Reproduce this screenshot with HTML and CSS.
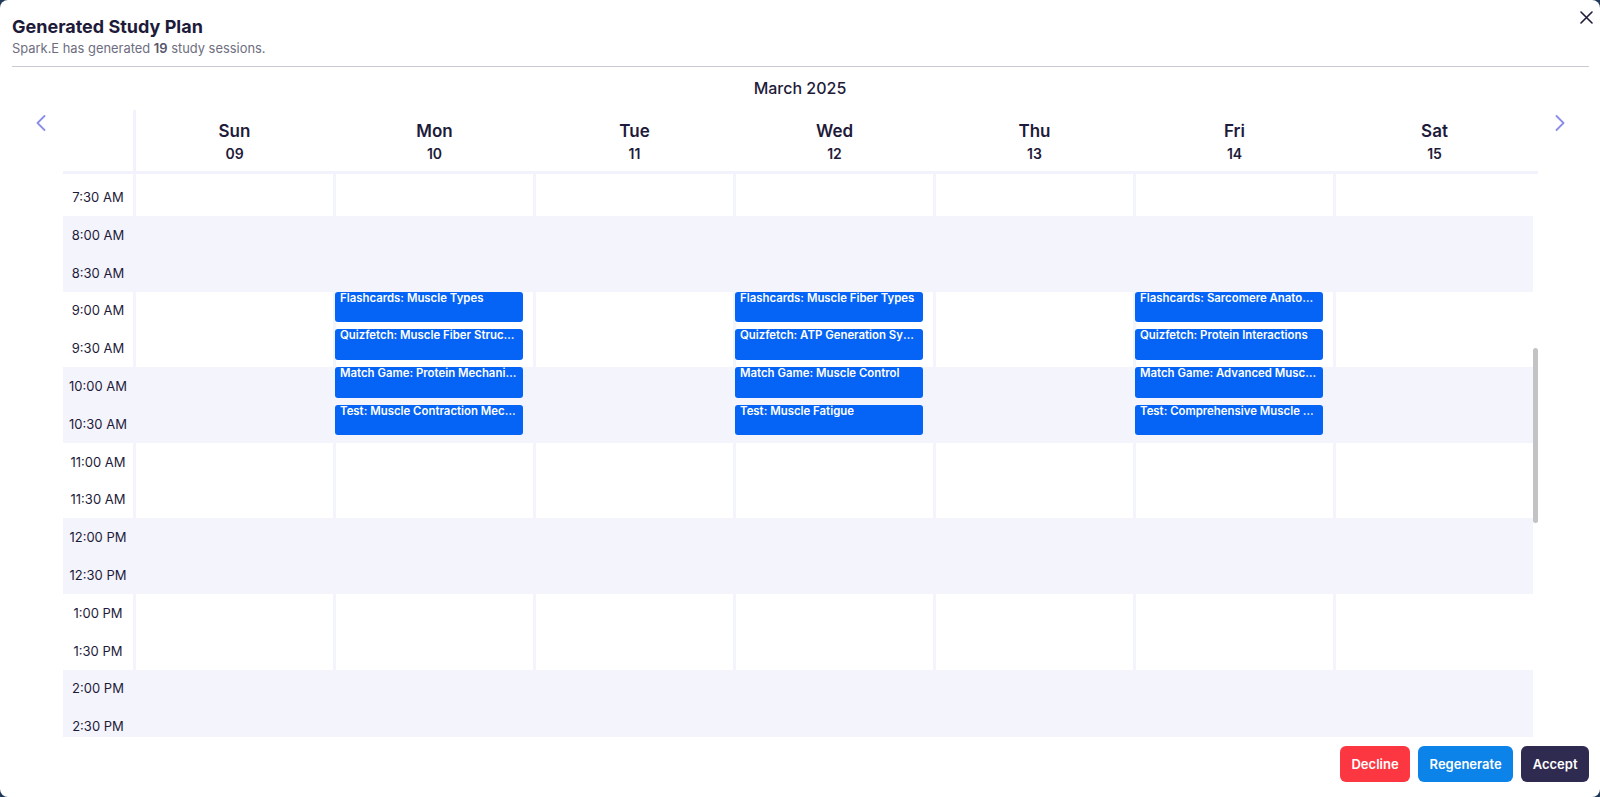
FILE: index.html
```html
<!DOCTYPE html>
<html lang="en">
<head>
<meta charset="utf-8">
<title>Generated Study Plan</title>
<link rel="stylesheet" href="styles.css">
</head>
<body>
<div class="modal">
  <div class="head">
    <div class="titles">
      <h1 class="title">Generated Study Plan</h1>
      <p class="subtitle">Spark.E has generated <b>19</b> study sessions.</p>
    </div>
    <button class="close" aria-label="Close">
      <svg width="13" height="13" viewBox="0 0 13 13"><path d="M1 1 L12 12 M12 1 L1 12" stroke="#1e1b3a" stroke-width="1.6" stroke-linecap="round" fill="none"/></svg>
    </button>
  </div>
  <div class="divider"></div>
  <div class="month">March 2025</div>

  <div class="cal-row">
    <div class="nav nav-left">
      <svg width="10" height="16" viewBox="0 0 10 16"><path d="M8.5 1 L1.5 8 L8.5 15" stroke="#8a8ee8" stroke-width="1.8" stroke-linecap="round" stroke-linejoin="round" fill="none"/></svg>
    </div>

    <div class="cal">
      <div class="cal-head">
        <div class="grid head-grid">
          <div class="corner"></div>
          <div class="day"><span class="dname">Sun</span><span class="dnum">09</span></div>
          <div class="day"><span class="dname">Mon</span><span class="dnum">10</span></div>
          <div class="day"><span class="dname">Tue</span><span class="dnum">11</span></div>
          <div class="day"><span class="dname">Wed</span><span class="dnum">12</span></div>
          <div class="day"><span class="dname">Thu</span><span class="dnum">13</span></div>
          <div class="day"><span class="dname">Fri</span><span class="dnum">14</span></div>
          <div class="day"><span class="dname">Sat</span><span class="dnum">15</span></div>
        </div>
      </div>
      <div class="cal-body">
        <div class="rows">
          <div class="grid hour white first">
            <div class="tcell"><span class="tl">7:30 AM</span></div>
            <div class="cell"></div><div class="cell"></div><div class="cell"></div><div class="cell"></div><div class="cell"></div><div class="cell"></div><div class="cell"></div>
          </div>
          <div class="grid hour shade">
            <div class="tcell"><span class="tl">8:00 AM</span><span class="tl">8:30 AM</span></div>
            <div class="cell"></div><div class="cell"></div><div class="cell"></div><div class="cell"></div><div class="cell"></div><div class="cell"></div><div class="cell"></div>
          </div>
          <div class="grid hour white">
            <div class="tcell"><span class="tl">9:00 AM</span><span class="tl">9:30 AM</span></div>
            <div class="cell"></div>
            <div class="cell">
              <div class="ev">Flashcards: Muscle Types</div>
              <div class="ev">Quizfetch: Muscle Fiber Structure</div>
            </div>
            <div class="cell"></div>
            <div class="cell">
              <div class="ev">Flashcards: Muscle Fiber Types</div>
              <div class="ev">Quizfetch: ATP Generation Systems</div>
            </div>
            <div class="cell"></div>
            <div class="cell">
              <div class="ev">Flashcards: Sarcomere Anatomy</div>
              <div class="ev">Quizfetch: Protein Interactions</div>
            </div>
            <div class="cell"></div>
          </div>
          <div class="grid hour shade">
            <div class="tcell"><span class="tl">10:00 AM</span><span class="tl">10:30 AM</span></div>
            <div class="cell"></div>
            <div class="cell">
              <div class="ev">Match Game: Protein Mechanisms</div>
              <div class="ev">Test: Muscle Contraction Mechanisms</div>
            </div>
            <div class="cell"></div>
            <div class="cell">
              <div class="ev">Match Game: Muscle Control</div>
              <div class="ev">Test: Muscle Fatigue</div>
            </div>
            <div class="cell"></div>
            <div class="cell">
              <div class="ev">Match Game: Advanced Muscle Physiology</div>
              <div class="ev">Test: Comprehensive Muscle Review</div>
            </div>
            <div class="cell"></div>
          </div>
          <div class="grid hour white">
            <div class="tcell"><span class="tl">11:00 AM</span><span class="tl">11:30 AM</span></div>
            <div class="cell"></div><div class="cell"></div><div class="cell"></div><div class="cell"></div><div class="cell"></div><div class="cell"></div><div class="cell"></div>
          </div>
          <div class="grid hour shade">
            <div class="tcell"><span class="tl">12:00 PM</span><span class="tl">12:30 PM</span></div>
            <div class="cell"></div><div class="cell"></div><div class="cell"></div><div class="cell"></div><div class="cell"></div><div class="cell"></div><div class="cell"></div>
          </div>
          <div class="grid hour white">
            <div class="tcell"><span class="tl">1:00 PM</span><span class="tl">1:30 PM</span></div>
            <div class="cell"></div><div class="cell"></div><div class="cell"></div><div class="cell"></div><div class="cell"></div><div class="cell"></div><div class="cell"></div>
          </div>
          <div class="grid hour shade">
            <div class="tcell"><span class="tl">2:00 PM</span><span class="tl">2:30 PM</span></div>
            <div class="cell"></div><div class="cell"></div><div class="cell"></div><div class="cell"></div><div class="cell"></div><div class="cell"></div><div class="cell"></div>
          </div>
        </div>
        <div class="track"><div class="thumb"></div></div>
      </div>
    </div>

    <div class="nav nav-right">
      <svg width="10" height="16" viewBox="0 0 10 16"><path d="M1.5 1 L8.5 8 L1.5 15" stroke="#8a8ee8" stroke-width="1.8" stroke-linecap="round" stroke-linejoin="round" fill="none"/></svg>
    </div>
  </div>

  <div class="footer">
    <button class="btn btn-decline">Decline</button>
    <button class="btn btn-regen">Regenerate</button>
    <button class="btn btn-accept">Accept</button>
  </div>
</div>
</body>
</html>
```

FILE: styles.css
```css
* { box-sizing: border-box; }

html, body {
  margin: 0;
  padding: 0;
}

body {
  background: #22395a;
  font-family: Inter, "Noto Sans", "Liberation Sans", sans-serif;
  color: #1e1b3a;
  width: 1600px;
  height: 797px;
  overflow: hidden;
}

.modal {
  width: 1600px;
  height: 797px;
  background: #ffffff;
  border-radius: 8px;
  display: flex;
  flex-direction: column;
}

.head {
  display: flex;
  align-items: flex-start;
  padding: 0 7px 0 12px;
}

.titles {
  flex: 1;
  padding-top: 15.5px;
}

.title {
  margin: 0;
  font-size: 18px;
  line-height: 22px;
  font-weight: 700;
  color: #1e1b3a;
}

.subtitle {
  margin: 3.75px 0 0;
  font-size: 12.9px;
  line-height: 16px;
  color: #6e6e80;
}

.subtitle b {
  font-weight: 600;
  color: #55556a;
}

.close {
  margin-top: 11px;
  width: 13px;
  height: 13px;
  padding: 0;
  border: 0;
  background: none;
  display: block;
}

.close svg { display: block; }

.divider {
  margin: 8.75px 11px 0 12px;
  height: 1px;
  background: #c9c9d2;
}

.month {
  margin-top: 11px;
  text-align: center;
  font-size: 16px;
  line-height: 20px;
  font-weight: 500;
  color: #1e1b3a;
}

.cal-row {
  margin-top: 12px;
  display: flex;
  align-items: flex-start;
}

.nav {
  padding-top: 5px;
}

.nav svg { display: block; }

.nav-left {
  width: 63px;
  padding-left: 36px;
}

.nav-right {
  padding-left: 17px;
}

.cal {
  width: 1475px;
}

.grid {
  display: grid;
  grid-template-columns: 70px repeat(7, 197px);
  column-gap: 3px;
  width: 1470px;
}

.cal-head {
  border-bottom: 3px solid #f2f2fc;
}

.head-grid {
  background: #ffffff;
  height: 61px;
}

.corner {
  background: #ffffff;
  box-shadow: 3px 0 0 #f2f2fc;
}

.day {
  display: flex;
  flex-direction: column;
  align-items: center;
  padding-top: 10.5px;
}

.dname {
  font-size: 17px;
  line-height: 20px;
  font-weight: 600;
  color: #1e1b3a;
}

.dnum {
  margin-top: 4px;
  font-size: 14px;
  line-height: 17px;
  font-weight: 600;
  color: #1e1b3a;
}

.cal-body {
  display: flex;
  height: 563px;
  overflow: hidden;
}

.rows {
  width: 1470px;
  display: flex;
  flex-direction: column;
}

.hour {
  background: #f4f4fd;
  height: 75.6px;
  flex: none;
}

.hour.first {
  height: 42px;
}

.tcell {
  display: flex;
  flex-direction: column;
  justify-content: flex-end;
}

.hour:not(.first) .tcell {
  justify-content: flex-start;
}

.tl {
  height: 37.8px;
  display: flex;
  align-items: center;
  justify-content: center;
  font-size: 13px;
  font-weight: 400;
  color: #1e1b3a;
  white-space: nowrap;
}

.white .tcell,
.white .cell {
  background: #ffffff;
}

.cell {
  display: flex;
  flex-direction: column;
  gap: 7.3px;
  min-width: 0;
}

.ev {
  margin-left: -1px;
  width: 188px;
  height: 30.5px;
  flex: none;
  background: #0563f5;
  border-radius: 3px;
  color: #ffffff;
  font-size: 11.4px;
  line-height: 13px;
  font-weight: 600;
  padding: 0 5px;
  white-space: nowrap;
  overflow: hidden;
  text-overflow: ellipsis;
}

.track {
  width: 5px;
  padding-top: 174px;
}

.thumb {
  width: 5px;
  height: 175px;
  border-radius: 3px;
  background: #c3c3c6;
}

.footer {
  margin-top: 9px;
  display: flex;
  justify-content: flex-end;
  gap: 8px;
  padding-right: 11px;
}

.btn {
  height: 36px;
  padding: 0 11.5px;
  border: 0;
  border-radius: 6px;
  font-family: Inter, "Noto Sans", "Liberation Sans", sans-serif;
  font-size: 13px;
  font-weight: 600;
  color: #ffffff;
}

.btn-decline { background: #fc3742; }
.btn-regen { background: #0c83e9; }
.btn-accept { background: #2f2a4f; }
```
